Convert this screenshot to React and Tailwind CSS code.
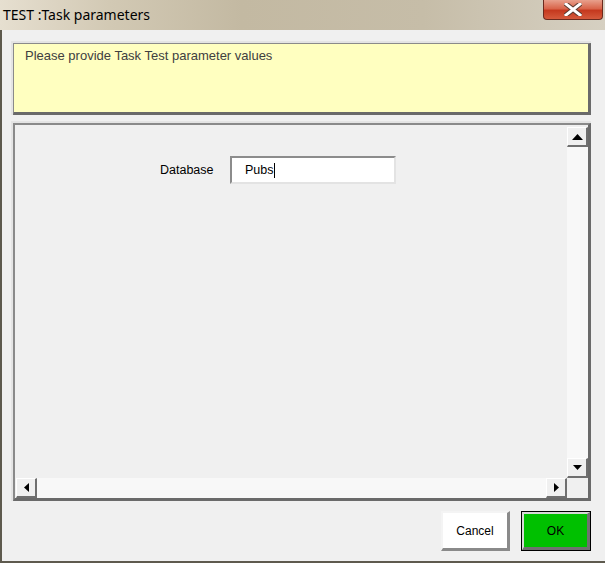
import React from "react";

const Up = () => (
  <svg width="11" height="6" viewBox="0 0 11 6"><path d="M0 6 L5.5 0 L11 6 Z" fill="#000" /></svg>
);
const Down = () => (
  <svg width="9" height="5" viewBox="0 0 9 5"><path d="M0 0 L9 0 L4.5 5 Z" fill="#000" /></svg>
);
const Left = () => (
  <svg width="5" height="9" viewBox="0 0 5 9"><path d="M5 0 L5 9 L0 4.5 Z" fill="#000" /></svg>
);
const Right = () => (
  <svg width="5" height="9" viewBox="0 0 5 9"><path d="M0 0 L0 9 L5 4.5 Z" fill="#000" /></svg>
);

const SBtn = ({ children }) => (
  <div className="w-[21px] h-[20px] flex items-center justify-center bg-[#f0f0f0] border-t border-l border-t-white border-l-white border-r-2 border-b-2 border-r-[#6f6f6f] border-b-[#6f6f6f]">
    {children}
  </div>
);

export default function App() {
  return (
    <div
      className="w-[605px] h-[563px] flex flex-col bg-[#f0f0f0] overflow-hidden"
      style={{ fontFamily: '"Liberation Sans", Arial, sans-serif' }}
    >
      {/* Title bar */}
      <div className="h-[30px] flex items-start justify-between bg-[linear-gradient(90deg,#e6dfd0_0%,#d2c9b4_18%,#c3b9a2_40%,#c6bda8_70%,#d6d0c2_100%)]">
        <div
          className="pl-[3px] pt-[5px] text-[14px] leading-[19px] text-black"
          style={{ fontFamily: '"Noto Sans", "Open Sans", sans-serif' }}
        >
          TEST :Task parameters
        </div>
        <div className="mr-[2px] w-[60px] h-[20px] rounded-b-[4px] border border-t-0 border-[#6b2a1e] bg-[linear-gradient(180deg,#e8a08c_0%,#d9654b_45%,#c5391f_55%,#d55a3c_100%)] flex items-center justify-center">
          <svg width="18" height="13" viewBox="0 0 18 13">
            <path d="M2 1 L16 12 M16 1 L2 12" stroke="#5a3a30" strokeWidth="5" strokeLinecap="square" />
            <path d="M2 1 L16 12 M16 1 L2 12" stroke="#ffffff" strokeWidth="3" strokeLinecap="square" />
          </svg>
        </div>
      </div>

      {/* Body */}
      <div className="flex-1 flex flex-col border-l-2 border-b-2 border-[#5e5a4e] pl-[9px] pr-[14px] pt-[11px]">
        {/* Yellow message box */}
        <div className="border-t-2 border-l-2 border-[#e4e4e4]">
          <div className="h-[72px] bg-[#ffffc0] border-t border-l border-t-[#8a8a8a] border-l-[#8a8a8a] border-r-[3px] border-b-[3px] border-r-[#6a6a6a] border-b-[#6a6a6a] pl-[11px] pt-[4px] text-[13px] leading-[16px] text-[#404040]">
            Please provide Task Test parameter values
          </div>
        </div>

        {/* Scroll panel */}
        <div className="mt-[6px] border-t-2 border-l-2 border-[#e4e4e4]">
          <div className="h-[378px] flex flex-col bg-[#f0f0f0] border-t-2 border-l-2 border-t-[#8a8a8a] border-l-[#8a8a8a] border-r-[3px] border-b-[3px] border-r-[#6a6a6a] border-b-[#6a6a6a]">
            <div className="flex-1 flex min-h-0">
              {/* content */}
              <div className="flex-1 pt-[31px]">
                <div className="flex items-center">
                  <div className="ml-[145px] w-[70px] text-[12.5px] text-black">Database</div>
                  <div className="w-[166px] h-[28px] bg-white border-t-2 border-l-2 border-t-[#8c8c8c] border-l-[#8c8c8c] border-r-2 border-b-2 border-r-[#e3e3e3] border-b-[#e3e3e3] flex items-center pl-[13px] text-[12.5px] text-black">
                    Pubs<span className="inline-block w-px h-[15px] bg-black" />
                  </div>
                </div>
              </div>
              {/* vertical scrollbar */}
              <div className="w-[21px] flex flex-col bg-[#f8f8f8] mt-[2px]">
                <SBtn><Up /></SBtn>
                <div className="flex-1" />
                <SBtn><Down /></SBtn>
              </div>
            </div>
            {/* horizontal scrollbar */}
            <div className="h-[20px] flex">
              <div className="flex-1 flex bg-[#f8f8f8] ml-px">
                <SBtn><Left /></SBtn>
                <div className="flex-1" />
                <SBtn><Right /></SBtn>
              </div>
              <div className="w-[21px] bg-[#f0f0f0]" />
            </div>
          </div>
        </div>

        {/* Buttons */}
        <div className="mt-[10px] flex justify-end gap-[11px]">
          <div className="w-[69px] h-[40px] bg-white border-t-2 border-l-2 border-t-[#f4f4f4] border-l-[#f4f4f4] border-r-[3px] border-b-[3px] border-r-[#8a8a8a] border-b-[#8a8a8a] flex items-center justify-center text-[12px] text-black">
            Cancel
          </div>
          <div className="w-[70px] h-[40px] border border-black">
            <div className="w-full h-full bg-[#00c000] border-t-2 border-l-2 border-t-[#d8d8d8] border-l-[#d8d8d8] border-r-[3px] border-b-[3px] border-r-[#707070] border-b-[#707070] flex items-center justify-center text-[12px] text-black">
              OK
            </div>
          </div>
        </div>
      </div>
    </div>
  );
}
